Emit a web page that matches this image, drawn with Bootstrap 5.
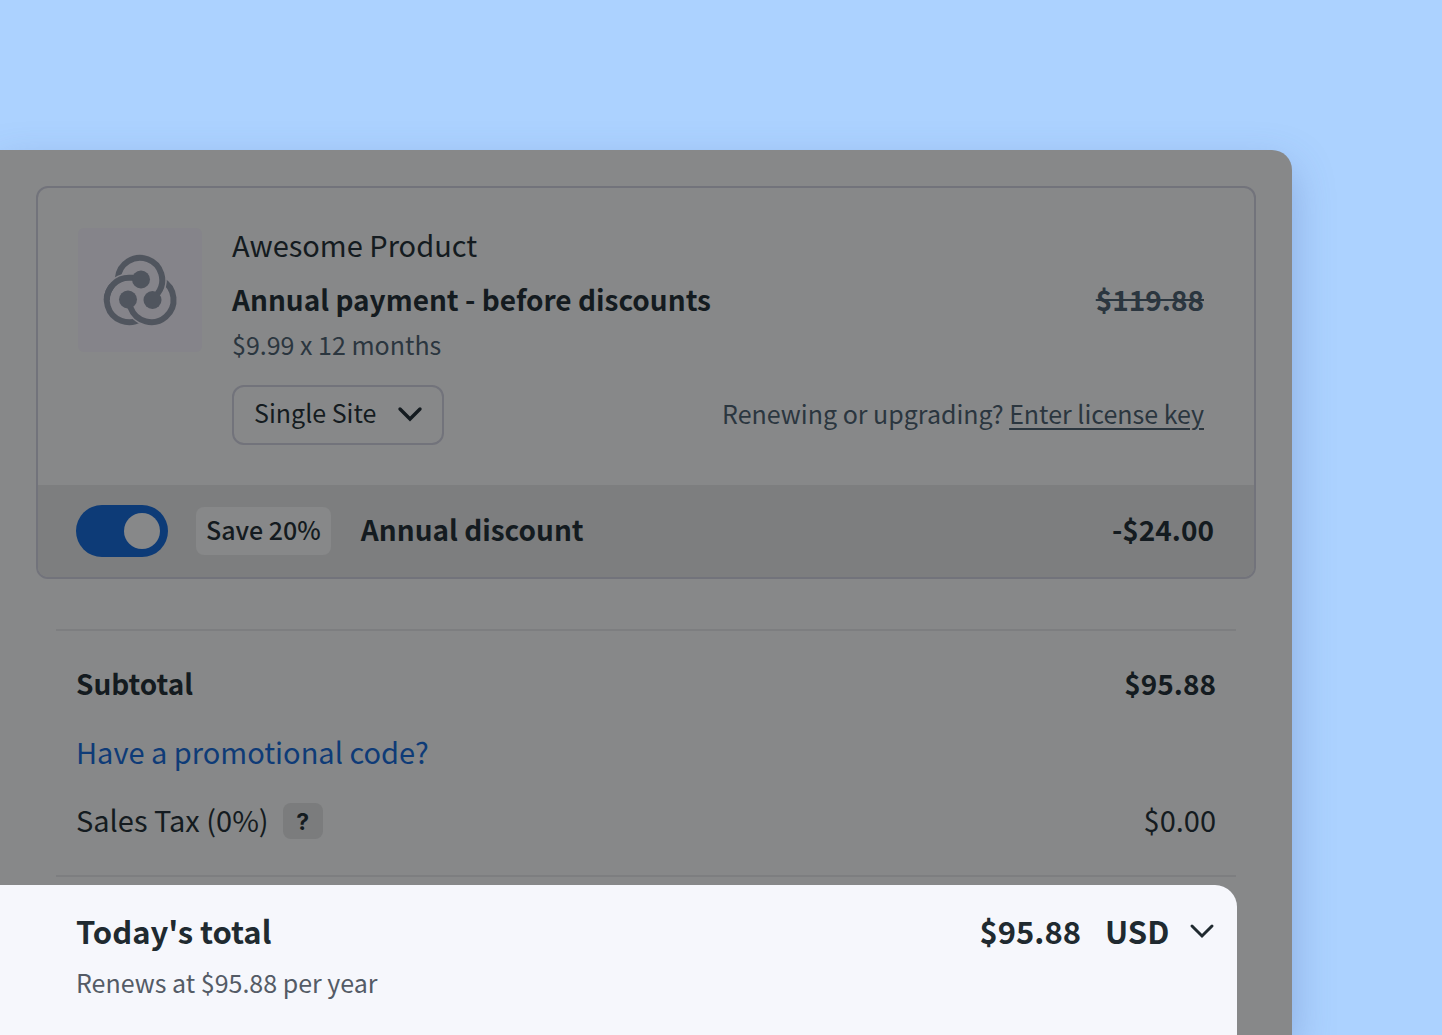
<!DOCTYPE html>
<html lang="en">
<head>
<meta charset="utf-8">
<meta name="viewport" content="width=device-width, initial-scale=1">
<title>Checkout</title>
<link href="https://cdn.jsdelivr.net/npm/bootstrap@5.3.0/dist/css/bootstrap.min.css" rel="stylesheet">
<style>
  :root { --ink: #141b20; --muted: #2b363f; --panel: #878889; --line: #72737b; }
  body { background: #acd2ff; color: var(--ink); font-family: "Noto Sans CJK SC", "Noto Sans", sans-serif; font-size: 29px; line-height: 40px; }
  .checkout { margin: 150px 150px 0 0; min-height: calc(100vh - 150px); background: var(--panel); border-top-right-radius: 20px; box-shadow: 0 16px 40px rgba(70, 95, 160, .34); }
  .checkout-body { padding: 36px 36px 8px; }
  .product { border: 2px solid var(--line); border-radius: 12px; overflow: hidden; }
  .product-main { padding: 36px 50px 40px 40px; gap: 30px; }
  .thumb { width: 124px; height: 124px; margin-top: 4px; border-radius: 6px; background: #85848a; }
  .plan { margin: 15px 0 7px; }
  .note { font-size: 25px; line-height: 36px; color: var(--muted); }
  .options { margin-top: 23px; }
  .renewal { padding-bottom: 4px; }
  .old-price { color: var(--muted); }
  .license { color: inherit; text-underline-offset: 4px; text-decoration-thickness: 2px; }
  .chevron-select { width: auto; border-radius: 12px; font-family: inherit; color: inherit; background-color: transparent; background-size: 26px 16px;
    background-image: url("data:image/svg+xml,%3csvg xmlns='http://www.w3.org/2000/svg' viewBox='0 0 26 16'%3e%3cpath d='M3 3l10 10L23 3' fill='none' stroke='%23141b20' stroke-width='3.4' stroke-linecap='round'/%3e%3c/svg%3e"); }
  .site-select { width: 212px; height: 60px; padding: 0 60px 6px 20px; border: 2px solid var(--line); font-size: 25px; line-height: 50px; background-position: right 19px top 19px; }
  .currency-select { width: 110px; height: 44px; padding: 0 30px 0 0; border: 0; font-size: 31px; font-weight: 700; line-height: 44px; background-position: right 0 center;
    background-image: url("data:image/svg+xml,%3csvg xmlns='http://www.w3.org/2000/svg' viewBox='0 0 26 16'%3e%3cpath d='M3 3l10 10L23 3' fill='none' stroke='%23202a30' stroke-width='3' stroke-linecap='round'/%3e%3c/svg%3e"); }
  .discount { height: 92px; padding: 0 40px 0 38px; background: #7d7e7f; }
  .form-switch .annual-switch { width: 92px; height: 52px; margin: 0; float: none; border: 0; border-radius: 26px; }
  .form-switch .annual-switch:checked { background-color: #0d3b77;
    background-image: url("data:image/svg+xml,%3csvg xmlns='http://www.w3.org/2000/svg' viewBox='-26 -26 52 52'%3e%3ccircle r='18' fill='%23878889'/%3e%3c/svg%3e"); }
  .saving { margin: 0 30px 0 28px; padding: 2px 10px 6px; border-radius: 8px; background: var(--panel); font-size: 25px; font-weight: 500; line-height: 40px; }
  .discount-text { padding-bottom: 4px; }
  .strong-text { font-size: 28px; font-weight: 700; }
  .rule { height: 2px; margin: 0 20px; background: #7d7e80; }
  .rule-first { margin-top: 50px; }
  .sums { padding: 32px 40px 36px; gap: 28px; }
  .promo { color: #0e3b77; }
  .tax-label { margin-right: 14px; }
  .help { width: 40px; height: 36px; margin-top: 4px; padding: 0; border-radius: 8px; background: #7b7c7d; color: var(--ink); font: 700 23px/36px Inter, sans-serif; }
  .total { margin-right: 55px; padding: 24px 22px 30px 76px; background: #f6f7fc; color: #202a30; border-top-right-radius: 22px; line-height: 44px; }
  .total .strong-text { font-size: 31px; }
  .total .note { color: #545b66; margin-top: 11px; }
</style>
</head>
<body>
<main class="checkout d-flex flex-column">
  <div class="checkout-body">
    <section class="product">
      <div class="product-main d-flex align-items-start">
        <svg class="thumb flex-shrink-0" viewBox="0 0 124 124" role="img" aria-label="Product logo">
          <!-- three interlocking rings; the wide strokes cut the gaps where one passes over another -->
          <g fill="none" stroke="#50555e" stroke-width="6">
            <path d="M51 49.800A22.200 22.200 0 1 0 63 90.700"/>
            <path d="M73.500 94.200A22.200 22.200 0 0 1 52.500 79.500" stroke="#85848a" stroke-width="9"/>
            <path d="M84 52.400A22.200 22.200 0 1 1 52.500 79.500L51 74"/>
            <path d="M73 32.700A22.200 22.200 0 0 1 82 62" stroke="#85848a" stroke-width="9"/>
            <path d="M39.900 50A22.200 22.200 0 1 1 80 65L76 70"/>
            <path d="M34 57.700A22.200 22.200 0 0 1 51 49.800" stroke="#85848a" stroke-width="9"/>
            <path d="M62 49.800H51A22.200 22.200 0 0 0 28.800 72"/>
          </g>
          <g fill="#50555e"><circle cx="63" cy="51.500" r="9"/><circle cx="50" cy="71.500" r="9"/><circle cx="74.500" cy="72" r="9"/></g>
        </svg>
        <div class="flex-grow-1">
          <div>Awesome Product</div>
          <div class="plan d-flex justify-content-between strong-text">
            <span>Annual payment - before discounts</span>
            <s class="old-price">$119.88</s>
          </div>
          <div class="note">$9.99 x 12 months</div>
          <div class="options d-flex justify-content-between align-items-center">
            <select class="form-select chevron-select site-select" aria-label="License">
              <option>Single Site</option>
            </select>
            <span class="note renewal">Renewing or upgrading? <a class="license" href="#">Enter license key</a></span>
          </div>
        </div>
      </div>
      <div class="discount d-flex align-items-center strong-text">
        <div class="form-switch p-0 m-0 d-flex"><input class="form-check-input annual-switch" type="checkbox" role="switch" id="annual" checked></div>
        <span class="saving">Save 20%</span>
        <label class="discount-text" for="annual">Annual discount</label>
        <span class="discount-text ms-auto">-$24.00</span>
      </div>
    </section>
    <div class="rule rule-first"></div>
    <section class="sums d-flex flex-column">
      <div class="d-flex justify-content-between strong-text"><span>Subtotal</span><span>$95.88</span></div>
      <div><a class="promo text-decoration-none" href="#">Have a promotional code?</a></div>
      <div class="d-flex align-items-center">
        <span class="tax-label">Sales Tax (0%)</span>
        <button class="btn help" type="button" aria-label="About sales tax">?</button>
        <span class="ms-auto">$0.00</span>
      </div>
    </section>
    <div class="rule"></div>
  </div>
  <section class="total flex-grow-1">
    <div class="d-flex align-items-center strong-text">
      <span>Today's total</span>
      <span class="ms-auto me-4">$95.88</span>
      <select class="form-select chevron-select currency-select" aria-label="Currency"><option>USD</option></select>
    </div>
    <div class="note">Renews at $95.88 per year</div>
  </section>
</main>
<script src="https://cdn.jsdelivr.net/npm/bootstrap@5.3.0/dist/js/bootstrap.bundle.min.js"></script>
</body>
</html>
